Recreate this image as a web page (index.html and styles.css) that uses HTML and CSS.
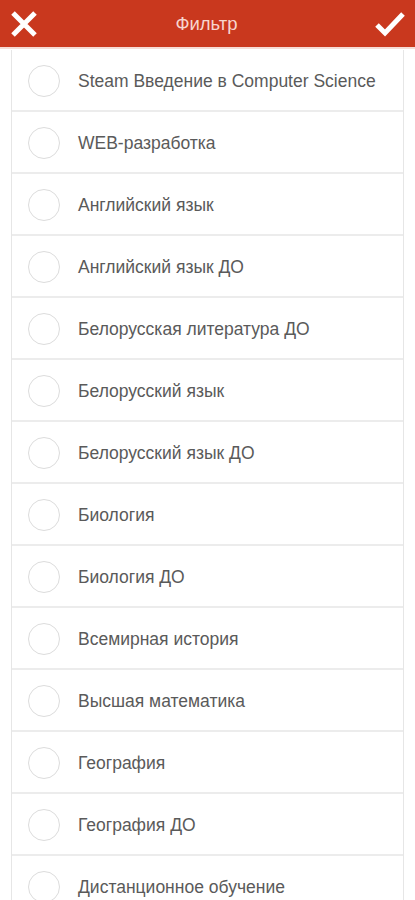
FILE: index.html
```html
<!DOCTYPE html>
<html lang="ru">
<head>
    <meta charset="UTF-8">
    <meta name="viewport" content="width=device-width, initial-scale=1.0">
    <title>Фильтр</title>
    <link rel="stylesheet" href="styles.css">
</head>
<body>
    <div class="topbar">
        <button class="icon-btn" aria-label="close">
            <svg width="28" height="28" viewBox="0 0 28 28">
                <path d="M3 3 L25 25 M25 3 L3 25" stroke="#fff" stroke-width="5" stroke-linecap="butt"/>
            </svg>
        </button>
        <div class="title">Фильтр</div>
        <button class="icon-btn" aria-label="apply">
            <svg width="30" height="26" viewBox="0 0 30 26">
                <path d="M2 14 L10 22 L28 3" stroke="#fff" stroke-width="5" fill="none"/>
            </svg>
        </button>
    </div>
    <ul class="list">
        <li class="item"><span class="radio"></span><span class="label">Steam Введение в Computer Science</span></li>
        <li class="item"><span class="radio"></span><span class="label">WEB-разработка</span></li>
        <li class="item"><span class="radio"></span><span class="label">Английский язык</span></li>
        <li class="item"><span class="radio"></span><span class="label">Английский язык ДО</span></li>
        <li class="item"><span class="radio"></span><span class="label">Белорусская литература ДО</span></li>
        <li class="item"><span class="radio"></span><span class="label">Белорусский язык</span></li>
        <li class="item"><span class="radio"></span><span class="label">Белорусский язык ДО</span></li>
        <li class="item"><span class="radio"></span><span class="label">Биология</span></li>
        <li class="item"><span class="radio"></span><span class="label">Биология ДО</span></li>
        <li class="item"><span class="radio"></span><span class="label">Всемирная история</span></li>
        <li class="item"><span class="radio"></span><span class="label">Высшая математика</span></li>
        <li class="item"><span class="radio"></span><span class="label">География</span></li>
        <li class="item"><span class="radio"></span><span class="label">География ДО</span></li>
        <li class="item"><span class="radio"></span><span class="label">Дистанционное обучение</span></li>
    </ul>
</body>
</html>
```

FILE: styles.css
```css
*{
    margin: 0;
    padding: 0;
    box-sizing: border-box;
}
body{
    font-family: "Liberation Sans", Arial, sans-serif;
    background: #fff;
    overflow: hidden;
}
.topbar{
    display: flex;
    align-items: center;
    justify-content: space-between;
    height: 49px;
    padding: 0 10px 0 10px;
    background: #c9381e;
    border-bottom: 2px solid #f6dcd6;
}
.icon-btn{
    display: flex;
    align-items: center;
    background: none;
    border: none;
}
.title{
    color: #f7d6cf;
    font-size: 18.5px;
}
.list{
    list-style: none;
    margin: 1px 11px 0 11px;
    border-left: 1px solid #e6e6e6;
    border-right: 1px solid #e6e6e6;
}
.item{
    display: flex;
    align-items: center;
    height: 62px;
    padding-left: 16px;
    padding-top: 2px;
    border-bottom: 2px solid #ececec;
}
.radio{
    width: 32px;
    height: 32px;
    border: 1px solid #dcdcdc;
    border-radius: 50%;
    flex-shrink: 0;
}
.label{
    margin-left: 18px;
    font-size: 17.5px;
    color: #5a5a5a;
}
```
